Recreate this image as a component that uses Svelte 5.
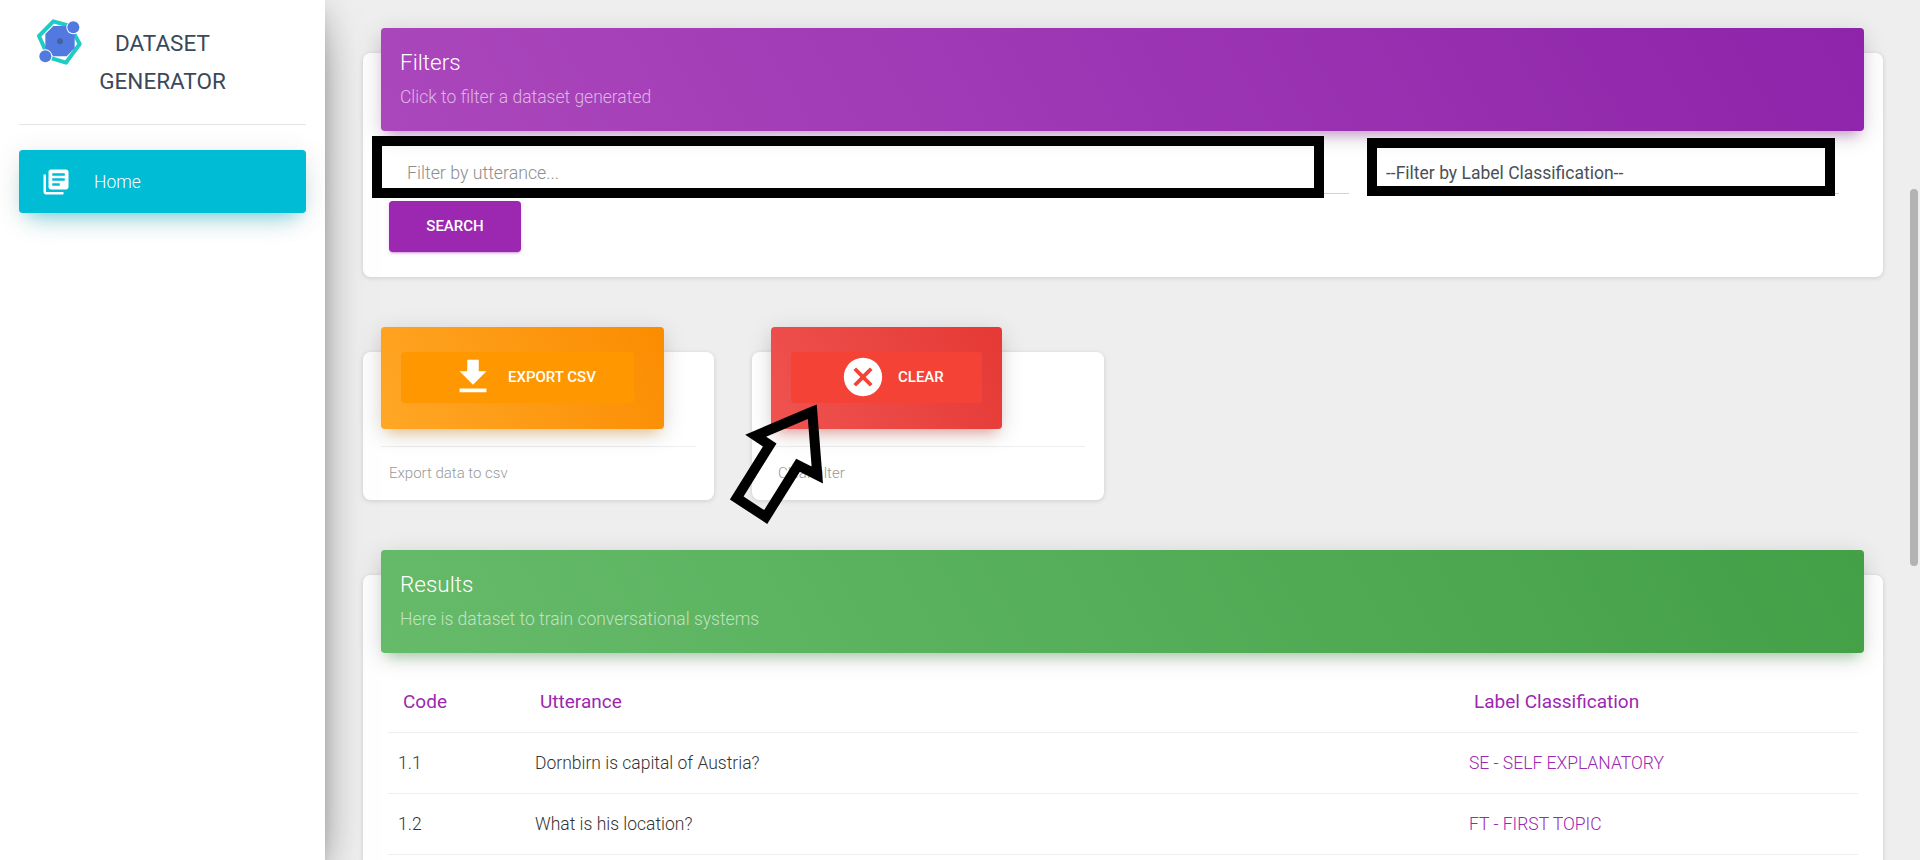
<script>
  const rows = [
    { code: '1.1', utterance: 'Dornbirn is capital of Austria?', label: 'SE - SELF EXPLANATORY' },
    { code: '1.2', utterance: 'What is his location?', label: 'FT - FIRST TOPIC' }
  ];
</script>

<div class="layout">
  <aside class="sidebar">
    <div class="brand">
      <svg class="logo" viewBox="0 0 180 180" aria-hidden="true">
        <polygon points="27,66 70,22 120,36 149,90 108,146 56,130" fill="none" stroke="#1fcbc4" stroke-width="12" stroke-linejoin="round" />
        <polygon points="70,36 110,36 134,60 134,102 110,127 70,127 46,102 46,60" fill="#5179e0" />
        <circle cx="90" cy="82" r="9" fill="#44609f" />
        <circle cx="130" cy="40" r="21" fill="#fff" />
        <circle cx="130" cy="40" r="18" fill="#5179e0" />
        <circle cx="46" cy="127" r="21" fill="#fff" />
        <circle cx="46" cy="127" r="18" fill="#5179e0" />
      </svg>
      <div class="brand-name">DATASET<br />GENERATOR</div>
    </div>
    <nav class="nav">
      <a class="nav-item" href="#home">
        <svg viewBox="0 0 24 24" class="nav-icon" aria-hidden="true">
          <path d="M4 6H2v14c0 1.1.9 2 2 2h14v-2H4V6zm16-4H8c-1.1 0-2 .9-2 2v12c0 1.1.9 2 2 2h12c1.100 0 2-.9 2-2V4c0-1.100-.9-2-2-2zm-1 9H9V9h10v2zm-4 4H9v-2h6v2zm4-8H9V5h10v2z" />
        </svg>
        <span>Home</span>
      </a>
    </nav>
  </aside>

  <main class="main">
    <section class="card filters">
      <div class="card-header purple">
        <h4>Filters</h4>
        <p>Click to filter a dataset generated</p>
      </div>
      <div class="filter-row">
        <input class="field utterance" type="text" placeholder="Filter by utterance..." />
        <select class="field label-select">
          <option>--Filter by Label Classification--</option>
        </select>
        <div class="mark mark-input"></div>
        <div class="mark mark-select"></div>
      </div>
      <button class="search">SEARCH</button>
    </section>

    <div class="stats">
      <section class="card stat-card export">
        <div class="stat-header orange">
          <button class="stat-button">
            <svg viewBox="0 0 24 24" aria-hidden="true"><path d="M19 9h-4V3H9v6H5l7 7 7-7zM5 18v2h14v-2H5z" /></svg>
            <span>EXPORT CSV</span>
          </button>
        </div>
        <div class="stat-footer">Export data to csv</div>
      </section>

      <section class="card stat-card clear">
        <div class="stat-header red">
          <button class="stat-button">
            <svg viewBox="0 0 24 24" aria-hidden="true"><path d="M12 2C6.470 2 2 6.470 2 12s4.470 10 10 10 10-4.470 10-10S17.530 2 12 2zm5 13.590L15.590 17 12 13.410 8.410 17 7 15.590 10.590 12 7 8.410 8.410 7 12 10.590 15.590 7 17 8.410 13.410 12 17 15.590z" /></svg>
            <span>CLEAR</span>
          </button>
        </div>
        <div class="stat-footer">Clear filter</div>
      </section>
    </div>

    <section class="card results">
      <div class="card-header green">
        <h4>Results</h4>
        <p>Here is dataset to train conversational systems</p>
      </div>
      <table>
        <colgroup>
          <col class="col-code" />
          <col />
          <col class="col-label" />
        </colgroup>
        <thead>
          <tr>
            <th>Code</th>
            <th>Utterance</th>
            <th>Label Classification</th>
          </tr>
        </thead>
        <tbody>
          {#each rows as row}
            <tr>
              <td>{row.code}</td>
              <td>{row.utterance}</td>
              <td class="label">{row.label}</td>
            </tr>
          {/each}
        </tbody>
      </table>
    </section>
  </main>

  <div class="scrollbar"><div class="thumb"></div></div>

  <!-- callout arrow drawn over the screenshot -->
  <svg class="arrow" viewBox="0 0 1920 860" aria-hidden="true">
    <polygon points="812.300,411.700 755.700,435.700 769.700,445 736.700,498 765.700,517 798,465.300 817.300,475" />
  </svg>
</div>

<style>
  :global(body) {
    margin: 0;
    font-family: Roboto, "Liberation Sans", sans-serif;
    font-weight: 300;
    color: #3c4858;
  }

  .layout {
    position: relative;
    display: flex;
    width: 1920px;
    height: 860px;
    overflow: hidden;
    background: #eee;
  }

  .sidebar {
    position: relative;
    z-index: 2;
    flex: 0 0 325px;
    background: #fff;
    box-shadow: 0 20px 48px -15px rgba(0, 0, 0, 0.56), 0 5px 30px 0 rgba(0, 0, 0, 0.12), 0 10px 12px -6px rgba(0, 0, 0, 0.2);
  }

  .brand {
    position: relative;
    height: 100px;
    margin: 0 19px;
    padding-top: 24px;
    border-bottom: 1px solid #e4e4e4;
    text-align: center;
  }

  .logo {
    position: absolute;
    left: 11px;
    top: 14px;
    width: 60px;
    height: 60px;
  }

  .brand-name {
    font-size: 22.5px;
    font-weight: 400;
    line-height: 38px;
    color: #3c4858;
  }

  .nav {
    padding: 25px 19px 0;
  }

  .nav-item {
    display: flex;
    align-items: center;
    height: 63px;
    padding-left: 22px;
    border-radius: 3.75px;
    background: #00bcd4;
    color: #fff;
    font-size: 17.5px;
    text-decoration: none;
    box-shadow: 0 15px 25px -12px rgba(0, 188, 212, 0.4), 0 5px 30px 0 rgba(0, 0, 0, 0.1), 0 8px 12px -6px rgba(0, 188, 212, 0.2);
  }

  .nav-icon {
    width: 30px;
    height: 30px;
    margin-right: 23px;
    fill: #fff;
  }

  .main {
    flex: 1;
    min-width: 0;
    padding: 53px 0 0 38px;
  }

  .card {
    width: 1520px;
    background: #fff;
    border-radius: 7.5px;
    box-shadow: 0 1px 5px 0 rgba(0, 0, 0, 0.14);
  }

  .filters {
    padding-bottom: 25px;
  }

  .card-header {
    position: relative;
    top: -25px;
    height: 103px;
    margin: 0 19px -25px 18px;
    padding: 18px 19px 0;
    box-sizing: border-box;
    border-radius: 3.75px;
    color: #fff;
  }

  .card-header h4 {
    margin: 0;
    font-size: 22.5px;
    font-weight: 300;
    line-height: 32px;
  }

  .card-header p {
    margin: 7px 0 0;
    font-size: 17.5px;
    line-height: 24px;
    color: rgba(255, 255, 255, 0.62);
  }

  .purple {
    background: linear-gradient(60deg, #ab47bc, #8e24aa);
    box-shadow: 0 5px 25px 0 rgba(0, 0, 0, 0.14), 0 9px 12px -6px rgba(156, 39, 176, 0.4);
  }

  .green {
    background: linear-gradient(60deg, #66bb6a, #43a047);
    box-shadow: 0 5px 25px 0 rgba(0, 0, 0, 0.14), 0 9px 12px -6px rgba(76, 175, 80, 0.4);
  }

  .orange {
    background: linear-gradient(60deg, #ffa726, #fb8c00);
    box-shadow: 0 5px 25px 0 rgba(0, 0, 0, 0.14), 0 9px 12px -6px rgba(255, 152, 0, 0.4);
  }

  .red {
    background: linear-gradient(60deg, #ef5350, #e53935);
    box-shadow: 0 5px 25px 0 rgba(0, 0, 0, 0.14), 0 9px 12px -6px rgba(244, 67, 54, 0.4);
  }

  .filter-row {
    position: relative;
    display: flex;
    gap: 24px;
    margin: 0 0 0 25px;
    padding-top: 17px;
  }

  .field {
    height: 46px;
    box-sizing: border-box;
    margin: 0;
    padding: 5px 0 0;
    border: none;
    border-bottom: 1px solid #d2d2d2;
    border-radius: 0;
    background: transparent;
    outline: none;
    font-family: inherit;
    font-size: 17.5px;
    font-weight: 300;
    color: #495057;
  }

  .utterance {
    width: 961px;
    padding: 4px 0 0 19px;
    font-size: 17.75px;
  }

  .utterance::placeholder {
    color: #8e8e8e;
    opacity: 1;
  }

  .label-select {
    width: 466px;
    padding-left: 13px;
    appearance: none;
    font-weight: 400;
  }

  /* black annotation boxes sitting on top of the fields */
  .mark {
    position: absolute;
    box-sizing: border-box;
    border: 10px solid #000;
    pointer-events: none;
  }

  .mark-input {
    left: -16px;
    top: 5px;
    width: 952px;
    height: 62px;
  }

  .mark-select {
    left: 979px;
    top: 7px;
    width: 468px;
    height: 58px;
  }

  .search {
    display: block;
    width: 132px;
    height: 51px;
    margin: 7px 0 0 26px;
    padding-bottom: 3px;
    border: none;
    border-radius: 3.75px;
    background: #9c27b0;
    color: #fff;
    font-family: inherit;
    font-size: 15px;
    font-weight: 500;
    box-shadow: 0 2px 2px 0 rgba(156, 39, 176, 0.14), 0 3px 1px -2px rgba(156, 39, 176, 0.2), 0 1px 5px 0 rgba(156, 39, 176, 0.12);
  }

  .stats {
    display: flex;
    gap: 38px;
    margin: 75px 0;
  }

  .stat-card {
    display: flex;
    flex-direction: column;
    align-items: stretch;
    height: 148px;
  }

  .export {
    width: 351px;
  }

  .clear {
    width: 352px;
  }

  .stat-header {
    position: relative;
    top: -25px;
    align-self: flex-start;
    margin: 0 0 -25px 18px;
    padding: 25px 20px 26px;
    border-radius: 3.75px;
  }

  .export .stat-header {
    padding-right: 30px;
  }

  .clear .stat-header {
    margin-left: 19px;
  }

  .stat-button {
    display: flex;
    align-items: center;
    gap: 12px;
    height: 51px;
    padding: 0 38px 2px 49px;
    border: none;
    border-radius: 3.75px;
    color: #fff;
    font-family: inherit;
    font-size: 15px;
    font-weight: 500;
  }

  .export .stat-button {
    background: #ff9800;
  }

  .clear .stat-button {
    background: #f44336;
  }

  .stat-button svg {
    flex: none;
    width: 46px;
    height: 46px;
    fill: #fff;
  }

  .stat-footer {
    display: flex;
    align-items: center;
    height: 51px;
    margin: 17px 18px 0;
    padding: 0 0 2px 8px;
    border-top: 1px solid #eee;
    font-size: 15px;
    color: #999;
  }

  .clear .stat-footer {
    margin-right: 19px;
  }

  .results {
    height: 400px;
  }

  table {
    width: 1470px;
    margin: 19px 0 0 25px;
    border-collapse: collapse;
    table-layout: fixed;
  }

  .col-code {
    width: 137px;
  }

  .col-label {
    width: 399px;
  }

  th {
    height: 60px;
    padding: 0 0 0 15px;
    border-bottom: 1px solid #eee;
    box-sizing: border-box;
    text-align: left;
    font-size: 19px;
    font-weight: 400;
    color: #9c27b0;
  }

  td {
    height: 61px;
    padding: 0 0 0 10px;
    border-bottom: 1px solid #eee;
    box-sizing: border-box;
    font-size: 17.5px;
    font-weight: 300;
    color: #333;
  }

  td.label {
    color: #9c27b0;
  }

  .scrollbar {
    position: absolute;
    top: 0;
    right: 0;
    bottom: 0;
    width: 10px;
  }

  .thumb {
    width: 8px;
    height: 377px;
    margin-top: 189px;
    border-radius: 4px;
    background: #b3b3b3;
  }

  .arrow {
    position: absolute;
    inset: 0;
    width: 1920px;
    height: 860px;
    pointer-events: none;
  }

  .arrow polygon {
    fill: none;
    stroke: #000;
    stroke-width: 10;
    stroke-miterlimit: 10;
  }
</style>
